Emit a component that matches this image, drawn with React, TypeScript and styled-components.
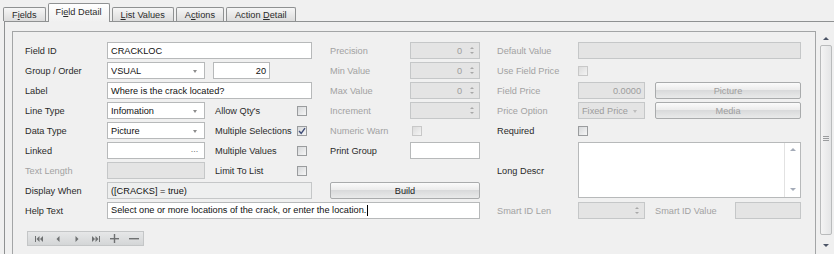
import React from "react";
import styled, { createGlobalStyle, css } from "styled-components";

const GlobalStyle = createGlobalStyle`
  html, body { margin: 0; padding: 0; width: 834px; height: 254px; overflow: hidden; background: #f0f0f0; }
  body { font-family: "Liberation Sans", Arial, sans-serif; font-size: 9.2px; color: #222; }
  #root { width: 834px; height: 254px; overflow: hidden; }
`;

type Place = { $c: string; $r: string };
const place = css<Place>`
  grid-column: ${(p) => p.$c};
  grid-row: ${(p) => p.$r};
`;

const Root = styled.div`
  width: 834px;
  height: 254px;
  overflow: hidden;
  background: #f0f0f0;
`;

const TabStrip = styled.div`
  height: 21px;
  display: flex;
  align-items: flex-end;
  gap: 2px;
  padding-left: 3px;
  box-sizing: border-box;
`;

const Tab = styled.div<{ $active?: boolean }>`
  box-sizing: border-box;
  height: ${(p) => (p.$active ? 19 : 14)}px;
  padding: ${(p) => (p.$active ? "0 7px 3px" : "0 8px")};
  border: 1px solid #8f9192;
  border-bottom: none;
  border-radius: 2px 2px 0 0;
  background: ${(p) => (p.$active ? "linear-gradient(#ffffff, #f0f0f0)" : "linear-gradient(#f6f6f6, #dcdcdc)")};
  margin-bottom: ${(p) => (p.$active ? -1 : 0)}px;
  position: relative;
  z-index: ${(p) => (p.$active ? 2 : 0)};
  display: flex;
  align-items: center;
  color: #2a2a2a;
  white-space: pre;
  u { text-decoration: underline; text-underline-offset: 1px; }
`;

const Panel = styled.div`
  margin-left: 4px;
  border-left: 1px solid #8f9192;
  border-top: 1px solid #8f9192;
  padding: 9px 0 0 7px;
  display: flex;
  gap: 2px;
`;

const FormBox = styled.div`
  flex: 1;
  height: 240px;
  box-sizing: border-box;
  border: 1px solid #a3a5a6;
  border-bottom: none;
  padding: 10px 0 0 12px;
`;

const Grid = styled.div`
  display: grid;
  grid-template-columns: 82px 98px 8px 57px 27px 15px 18px 80px 70px 17px 81px 67px 10px 80px 66px;
  grid-auto-rows: 17px;
  row-gap: 3px;
`;

const Label = styled.div<Place & { $dim?: boolean; $pad?: number }>`
  ${place};
  align-self: center;
  white-space: nowrap;
  padding-left: ${(p) => p.$pad ?? 0}px;
  color: ${(p) => (p.$dim ? "#a2a2a2" : "#2a2a2a")};
`;

type BoxKind = "edit" | "disabled" | "readonly";
const Box = styled.div<Place & { $kind?: BoxKind; $right?: boolean }>`
  ${place};
  box-sizing: border-box;
  height: 17px;
  border: 1px solid ${(p) => (p.$kind === "edit" || !p.$kind ? "#b7b9ba" : "#c5c7c8")};
  background: ${(p) => (p.$kind === "disabled" ? "#e4e4e4" : p.$kind === "readonly" ? "#eeefef" : "#ffffff")};
  color: ${(p) => (p.$kind === "disabled" ? "#9c9c9c" : "#111")};
  display: flex;
  align-items: center;
  justify-content: ${(p) => (p.$right ? "flex-end" : "flex-start")};
  padding: 0 3px;
  white-space: nowrap;
  overflow: hidden;
  gap: 4px;
`;

const Grow = styled.span`
  flex: 1;
  overflow: hidden;
`;

const Arrow = styled.span<{ $dim?: boolean }>`
  width: 0;
  height: 0;
  border-left: 2.5px solid transparent;
  border-right: 2.5px solid transparent;
  border-top: 3px solid ${(p) => (p.$dim ? "#bdbdbd" : "#8c8c8c")};
  margin: 1px 4px 0 0;
`;

const Dots = styled.span`
  color: #777;
  letter-spacing: -0.5px;
  margin-right: 3px;
  font-size: 9px;
`;

const SpinCol = styled.span`
  display: flex;
  flex-direction: column;
  gap: 3px;
  margin: 0 2px 0 4px;
`;

const SpinTri = styled.span<{ $up?: boolean }>`
  width: 0;
  height: 0;
  border-left: 2px solid transparent;
  border-right: 2px solid transparent;
  ${(p) => (p.$up ? "border-bottom: 2px solid #a8a8a8;" : "border-top: 2px solid #a8a8a8;")}
`;

const Caret = styled.span`
  display: inline-block;
  width: 1px;
  height: 11px;
  background: #000;
  margin-left: 1px;
  vertical-align: middle;
`;

const Check = styled.div<Place & { $dim?: boolean; $shift?: number }>`
  ${place};
  align-self: center;
  box-sizing: border-box;
  width: 10px;
  height: 10px;
  margin-left: ${(p) => p.$shift ?? 0}px;
  border: 1px solid ${(p) => (p.$dim ? "#c8c8c8" : "#9a9c9e")};
  background: ${(p) => (p.$dim ? "linear-gradient(135deg, #dcdcdc, #f4f4f4)" : "linear-gradient(135deg, #d6d8da, #f6f6f6)")};
  display: flex;
  align-items: center;
  justify-content: center;
`;

const Btn = styled.div<Place & { $dim?: boolean }>`
  ${place};
  box-sizing: border-box;
  height: 17px;
  border: 1px solid #a9abac;
  border-radius: 2px;
  background: linear-gradient(#fbfbfb 0%, #ececec 45%, #d9dadb 50%, #e9eaea 100%);
  display: flex;
  align-items: center;
  justify-content: center;
  color: ${(p) => (p.$dim ? "#9e9e9e" : "#222")};
`;

const Memo = styled.div<Place>`
  ${place};
  box-sizing: border-box;
  height: 56px;
  border: 1px solid #b7b9ba;
  background: #fff;
  display: flex;
  justify-content: flex-end;
`;

const MemoBar = styled.div`
  width: 15px;
  border-left: 1px solid #e2e2e2;
  display: flex;
  flex-direction: column;
  justify-content: space-between;
  align-items: center;
  padding: 5px 0 6px;
`;

const Tri = styled.span<{ $up?: boolean; $color: string; $w: number }>`
  width: 0;
  height: 0;
  border-left: ${(p) => p.$w}px solid transparent;
  border-right: ${(p) => p.$w}px solid transparent;
  ${(p) => (p.$up ? `border-bottom: ${p.$w}px solid ${p.$color};` : `border-top: ${p.$w}px solid ${p.$color};`)}
`;

const Navigator = styled.div`
  margin: 12px 0 0 2px;
  width: 117px;
  height: 15px;
  box-sizing: border-box;
  border: 1px solid #c4c6c7;
  background: linear-gradient(#e6e7e8, #d4d6d7);
  display: flex;
  align-items: center;
  padding-left: 1px;
`;

const NavSlot = styled.span`
  width: 19px;
  display: flex;
  justify-content: center;
  align-items: center;
`;

const ScrollBar = styled.div`
  width: 16px;
  height: 224px;
  display: flex;
  flex-direction: column;
  align-items: center;
`;

const ScrollBtn = styled.div<{ $h: number }>`
  height: ${(p) => p.$h}px;
  display: flex;
  align-items: center;
  justify-content: center;
`;

const Thumb = styled.div`
  width: 12px;
  height: 190px;
  box-sizing: border-box;
  border: 1px solid #b9bbbc;
  border-radius: 2px;
  background: linear-gradient(90deg, #f4f4f4, #e4e5e6);
  display: flex;
  flex-direction: column;
  align-items: center;
  justify-content: center;
  gap: 1px;
  padding-bottom: 4px;
`;

const Grip = styled.span`
  width: 6px;
  height: 1px;
  background: #9a9c9e;
`;

const navColor = "#6f7172";

const FirstIcon = () => (
  <svg width="8" height="6" viewBox="0 0 8 6">
    <rect x="0" y="0" width="1" height="6" fill={navColor} />
    <polygon points="4.5,0 1.5,3 4.5,6" fill={navColor} />
    <polygon points="8,0 5,3 8,6" fill={navColor} />
  </svg>
);
const LastIcon = () => (
  <svg width="8" height="6" viewBox="0 0 8 6">
    <polygon points="0,0 3,3 0,6" fill={navColor} />
    <polygon points="3.5,0 6.5,3 3.5,6" fill={navColor} />
    <rect x="7" y="0" width="1" height="6" fill={navColor} />
  </svg>
);
const PrevIcon = () => (
  <svg width="4" height="6" viewBox="0 0 4 6">
    <polygon points="3.5,0 0.5,3 3.5,6" fill={navColor} />
  </svg>
);
const NextIcon = () => (
  <svg width="4" height="6" viewBox="0 0 4 6">
    <polygon points="0.5,0 3.5,3 0.5,6" fill={navColor} />
  </svg>
);
const PlusIcon = () => (
  <svg width="9" height="9" viewBox="0 0 9 9">
    <rect x="0" y="4" width="9" height="1.4" fill={navColor} />
    <rect x="3.8" y="0" width="1.4" height="9" fill={navColor} />
  </svg>
);
const MinusIcon = () => (
  <svg width="10" height="2" viewBox="0 0 10 2">
    <rect x="0" y="0" width="10" height="1.4" fill={navColor} />
  </svg>
);

const CheckMark = () => (
  <svg width="8" height="8" viewBox="0 0 8 8">
    <path d="M1 4 L3.2 6.3 L7 1.2" fill="none" stroke="#3f4d78" strokeWidth="1.4" />
  </svg>
);

const Combo = ({ c, r, text, dim }: { c: string; r: string; text: string; dim?: boolean }) => (
  <Box $c={c} $r={r} $kind={dim ? "disabled" : "edit"}>
    <Grow>{text}</Grow>
    <Arrow $dim={dim} />
  </Box>
);

const Spin = ({ c, r, value }: { c: string; r: string; value?: string }) => (
  <Box $c={c} $r={r} $kind="disabled" $right>
    <span>{value}</span>
    <SpinCol>
      <SpinTri $up />
      <SpinTri />
    </SpinCol>
  </Box>
);

export default function App() {
  return (
    <Root>
      <GlobalStyle />
      <TabStrip>
        <Tab>F<u>i</u>elds</Tab>
        <Tab $active>Fi<u>e</u>ld{"\u00a0"}Detail</Tab>
        <Tab><u>L</u>ist{"\u00a0"}Values</Tab>
        <Tab>A<u>c</u>tions</Tab>
        <Tab>{"Action\u00a0"}<u>D</u>etail</Tab>
      </TabStrip>
      <Panel>
        <FormBox>
          <Grid>
            {/* Row 1 */}
            <Label $c="1" $r="1">Field ID</Label>
            <Box $c="2 / 7" $r="1">CRACKLOC</Box>
            <Label $c="8" $r="1" $dim>Precision</Label>
            <Spin c="9" r="1" value="0" />
            <Label $c="11" $r="1" $dim>Default Value</Label>
            <Box $c="12 / 16" $r="1" $kind="disabled" />

            {/* Row 2 */}
            <Label $c="1" $r="2">Group / Order</Label>
            <Combo c="2" r="2" text="VSUAL" />
            <Box $c="4" $r="2" $right>20</Box>
            <Label $c="8" $r="2" $dim>Min Value</Label>
            <Spin c="9" r="2" value="0" />
            <Label $c="11" $r="2" $dim>Use Field Price</Label>
            <Check $c="12" $r="2" $dim />

            {/* Row 3 */}
            <Label $c="1" $r="3">Label</Label>
            <Box $c="2 / 7" $r="3">Where is the crack located?</Box>
            <Label $c="8" $r="3" $dim>Max Value</Label>
            <Spin c="9" r="3" value="0" />
            <Label $c="11" $r="3" $dim>Field Price</Label>
            <Box $c="12" $r="3" $kind="disabled" $right>0.0000</Box>
            <Btn $c="14 / 16" $r="3" $dim>Picture</Btn>

            {/* Row 4 */}
            <Label $c="1" $r="4">Line Type</Label>
            <Combo c="2" r="4" text="Infomation" />
            <Label $c="4 / 6" $r="4" $pad={2}>Allow Qty's</Label>
            <Check $c="6" $r="4" />
            <Label $c="8" $r="4" $dim>Increment</Label>
            <Spin c="9" r="4" />
            <Label $c="11" $r="4" $dim>Price Option</Label>
            <Combo c="12" r="4" text="Fixed Price" dim />
            <Btn $c="14 / 16" $r="4" $dim>Media</Btn>

            {/* Row 5 */}
            <Label $c="1" $r="5">Data Type</Label>
            <Combo c="2" r="5" text="Picture" />
            <Label $c="4 / 6" $r="5" $pad={2}>Multiple Selections</Label>
            <Check $c="6" $r="5"><CheckMark /></Check>
            <Label $c="8" $r="5" $dim>Numeric Warn</Label>
            <Check $c="9" $r="5" $dim $shift={2} />
            <Label $c="11" $r="5">Required</Label>
            <Check $c="12" $r="5" />

            {/* Row 6 */}
            <Label $c="1" $r="6">Linked</Label>
            <Box $c="2" $r="6">
              <Grow />
              <Dots>···</Dots>
            </Box>
            <Label $c="4 / 6" $r="6" $pad={2}>Multiple Values</Label>
            <Check $c="6" $r="6" />
            <Label $c="8" $r="6">Print Group</Label>
            <Box $c="9" $r="6" />
            <Label $c="11" $r="6 / 9">Long Descr</Label>
            <Memo $c="12 / 16" $r="6 / 9">
              <MemoBar>
                <Tri $up $color="#a4abb8" $w={3.5} />
                <Tri $color="#a4abb8" $w={3.5} />
              </MemoBar>
            </Memo>

            {/* Row 7 */}
            <Label $c="1" $r="7" $dim>Text Length</Label>
            <Box $c="2" $r="7" $kind="disabled" />
            <Label $c="4 / 6" $r="7" $pad={2}>Limit To List</Label>
            <Check $c="6" $r="7" />

            {/* Row 8 */}
            <Label $c="1" $r="8">Display When</Label>
            <Box $c="2 / 7" $r="8" $kind="readonly">([CRACKS] = true)</Box>
            <Btn $c="8 / 10" $r="8">Build</Btn>

            {/* Row 9 */}
            <Label $c="1" $r="9">Help Text</Label>
            <Box $c="2 / 10" $r="9">
              <span>
                Select one or more locations of the crack, or enter the location.
                <Caret />
              </span>
            </Box>
            <Label $c="11" $r="9" $dim>Smart ID Len</Label>
            <Spin c="12" r="9" />
            <Label $c="14" $r="9" $dim>Smart ID Value</Label>
            <Box $c="15" $r="9" $kind="disabled" />
          </Grid>
          <Navigator>
            <NavSlot><FirstIcon /></NavSlot>
            <NavSlot><PrevIcon /></NavSlot>
            <NavSlot><NextIcon /></NavSlot>
            <NavSlot><LastIcon /></NavSlot>
            <NavSlot><PlusIcon /></NavSlot>
            <NavSlot><MinusIcon /></NavSlot>
          </Navigator>
        </FormBox>
        <ScrollBar>
          <ScrollBtn $h={14}>
            <Tri $up $color="#4c5466" $w={3.5} />
          </ScrollBtn>
          <Thumb>
            <Grip />
            <Grip />
            <Grip />
          </Thumb>
          <ScrollBtn $h={20}>
            <Tri $color="#4c5466" $w={3.5} />
          </ScrollBtn>
        </ScrollBar>
      </Panel>
    </Root>
  );
}
